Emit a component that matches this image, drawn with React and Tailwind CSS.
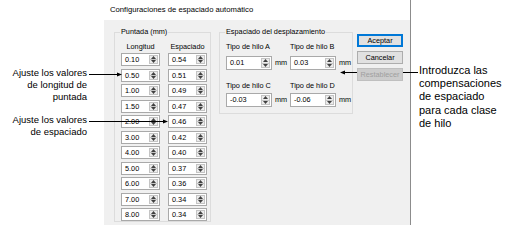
import React from "react";

const longitudes = ["0.10", "0.50", "1.00", "1.50", "2.00", "3.00", "4.00", "5.00", "6.00", "7.00", "8.00"];
const espaciados = ["0.54", "0.51", "0.49", "0.47", "0.46", "0.42", "0.40", "0.37", "0.36", "0.34", "0.34"];

const Arrow = ({ down }) => (
  <svg width="5" height="3" viewBox="0 0 5 3">
    <polygon points={down ? "0,0 5,0 2.5,3" : "0,3 5,3 2.5,0"} fill="#404040" />
  </svg>
);

// caja numérica con flechitas
const Spin = ({ value, w }) => (
  <div className={`flex h-[13px] border border-[#a9a9a9] bg-white ${w}`}>
    <div className="flex-1 pl-[3px] leading-[11px]">{value}</div>
    <div className="my-px mr-px flex w-[9px] flex-col border border-[#c4c4c4] bg-[#ececec]">
      <div className="flex flex-1 items-center justify-center border-b border-[#c4c4c4]">
        <Arrow />
      </div>
      <div className="flex flex-1 items-center justify-center">
        <Arrow down />
      </div>
    </div>
  </div>
);

const Group = ({ title, className, children }) => (
  <div className={`relative border border-[#dcdcdc] ${className}`}>
    <span className="absolute -top-[6px] left-[5px] bg-[#f0f0f0] px-px leading-[10px]">{title}</span>
    {children}
  </div>
);

const Button = ({ label, variant }) => {
  const styles = {
    default: "border-[#0078d7] shadow-[inset_0_0_0_1px_#0078d7] bg-[#e1e1e1] text-black",
    normal: "border-[#adadad] bg-[#e1e1e1] text-black",
    disabled: "border-[#bfbfbf] bg-[#cccccc] text-[#a0a0a0]",
  };
  return (
    <div className={`relative z-10 flex h-[13px] w-[46px] items-center justify-center border leading-none ${styles[variant]}`}>
      {label}
    </div>
  );
};

export default function App() {
  return (
    <div className="relative flex h-[241px] w-[510px] overflow-hidden bg-white font-['Liberation_Sans',Arial,sans-serif] text-black">
      {/* Notas izquierda */}
      <div className="w-[104px] pr-[17px] pt-[67px] text-right text-[9.5px] leading-[12px]">
        <p>Ajuste los valores</p>
        <p>de longitud de</p>
        <p>puntada</p>
        <p className="mt-[11px]">Ajuste los valores</p>
        <p>de espaciado</p>
      </div>

      {/* Diálogo */}
      <div className="flex h-[225px] w-[307px] flex-col border-r border-[#8c8c8c] text-[7.3px]">
        <div className="h-[20px] pl-[6px] text-[7.7px] leading-[20px]">Configuraciones de espaciado automático</div>
        <div className="flex flex-1 bg-[#f0f0f0] pl-[10px] pt-[12px]">
          <Group title="Puntada (mm)" className="h-[190px] w-[97px] pl-[6px] pt-[9px]">
            <div className="flex gap-[8px] leading-[10px]">
              <span className="w-[39px] text-center">Longitud</span>
              <span className="w-[39px] text-center">Espaciado</span>
            </div>
            <div className="mt-px flex flex-col gap-[2.5px]">
              {longitudes.map((l, i) => (
                <div key={l} className="flex gap-[8px]">
                  <Spin value={l} w="w-[39px]" />
                  <Spin value={espaciados[i]} w="w-[39px]" />
                </div>
              ))}
            </div>
          </Group>

          <Group title="Espaciado del desplazamiento" className="ml-[8px] h-[82px] w-[134px] pl-[6px] pt-[9px]">
            <div className="grid grid-cols-[64px_64px]">
              {[
                ["Tipo de hilo A", "0.01", "Tipo de hilo B", "0.03"],
                ["Tipo de hilo C", "-0.03", "Tipo de hilo D", "-0.06"],
              ].map((row, r) => (
                <React.Fragment key={r}>
                  {[0, 2].map((c) => (
                    <div key={c} className={r === 1 ? "mt-[11px]" : ""}>
                      <div className="leading-[10px]">{row[c]}</div>
                      <div className={`flex items-center ${r === 0 ? "mt-[4px]" : "mt-[2px]"}`}>
                        <Spin value={row[c + 1]} w="w-[46px] h-[14px]" />
                        <span className="ml-[3px]">mm</span>
                      </div>
                    </div>
                  ))}
                </React.Fragment>
              ))}
            </div>
          </Group>

          <div className="ml-[4px] mt-[2px] flex flex-col gap-[4px]">
            <Button label="Aceptar" variant="default" />
            <Button label="Cancelar" variant="normal" />
            <Button label="Restablecer" variant="disabled" />
          </div>
        </div>
      </div>

      {/* Nota derecha */}
      <div className="pl-[8px] pt-[64px] text-[11px] leading-[13.2px]">
        <p>Introduzca las</p>
        <p>compensaciones</p>
        <p>de espaciado</p>
        <p>para cada clase</p>
        <p>de hilo</p>
      </div>

      {/* Líneas de las flechas */}
      <svg className="pointer-events-none absolute inset-0 z-20" width="510" height="241">
        <line x1="89" y1="74.5" x2="118" y2="74.5" stroke="#000" strokeWidth="1" />
        <polygon points="117,72.5 122,74.5 117,76.5" fill="#000" />
        <line x1="89" y1="121.5" x2="164" y2="121.5" stroke="#000" strokeWidth="1" />
        <polygon points="163,119.5 168,121.5 163,123.5" fill="#000" />
        <line x1="344" y1="72.5" x2="357" y2="72.5" stroke="#000" strokeWidth="1" />
        <line x1="403" y1="72.5" x2="418" y2="72.5" stroke="#000" strokeWidth="1" />
        <polygon points="345,70.5 340,72.5 345,74.5" fill="#000" />
      </svg>
    </div>
  );
}
